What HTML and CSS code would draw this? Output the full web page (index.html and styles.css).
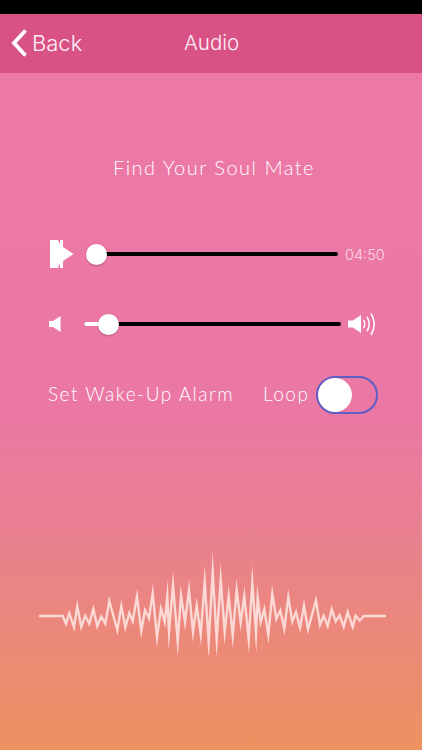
FILE: index.html
```html
<!DOCTYPE html>
<html lang="en">
<head>
<meta charset="utf-8">
<title>Audio</title>
<link rel="stylesheet" href="styles.css">
</head>
<body>
<div class="status"></div>
<header class="nav">
  <div class="back">
    <svg class="chevron" width="16" height="28" viewBox="0 0 16 28"><path d="M14.500 1.500 L3 14 L14.500 26.500" fill="none" stroke="#fff" stroke-width="3.800"/></svg>
    <span>Back</span>
  </div>
  <h1 class="nav-title">Audio</h1>
</header>
<main class="content">
  <h2 class="track-title">Find Your Soul Mate</h2>
  <div class="player">
    <svg class="play" width="24" height="30" viewBox="0 0 24 30"><path d="M0 1 H8 L10 5.500 V1 H13 V8 L23.500 15 L13 22 V29 H10 V24.500 L8 29 H0 Z" fill="#fff"/></svg>
    <div class="track track-seek"><span class="knob knob-seek"></span></div>
    <span class="time">04:50</span>
  </div>
  <div class="volume">
    <svg class="vol-low" width="12" height="16" viewBox="0 0 12 16"><path d="M0 5 H4 L11.500 0 V16 L4 11 H0 Z" fill="#fff"/></svg>
    <div class="track track-vol"><span class="fill"></span><span class="knob knob-vol"></span></div>
    <svg class="vol-high" width="29" height="24" viewBox="0 0 29 24"><path d="M0 8.500 H5 L13 3 V21 L5 15.500 H0 Z" fill="#fff"/><path d="M15.500 8 Q18 12 15.500 16 M19 5 Q23.500 12 19 19 M23 1.500 Q29.500 12 23 23" fill="none" stroke="#fff" stroke-width="1.500"/></svg>
  </div>
  <div class="options">
    <span class="alarm">Set Wake-Up Alarm</span>
    <span class="loop">Loop</span>
    <span class="switch"><span class="switch-knob"></span></span>
  </div>
  <svg class="wave" width="422" height="110" viewBox="0 545 422 110">
    <polyline transform="translate(0 616) scale(1 .72) translate(0 -616)" vector-effect="non-scaling-stroke" fill="none" stroke="#fcd9d4" stroke-width="2.400" stroke-linejoin="miter" stroke-miterlimit="24" points="39,616 62.700,616 66,626.700 69.300,612.300 74,631.700 77.300,602.300 81.300,631 85.300,615.700 89.300,626.700 93.300,606.300 97.300,630 101.300,616.700 105.300,626.700 109.300,595 117.300,635.700 121.300,602.300 125.300,631.700 129.300,611.700 132.700,623.300 137,589 141.300,636.700 145,607.700 149,619 152.700,584.300 157,645.700 161,605.700 164.700,623.700 167.300,588.300 169,638.300 173,573.300 177.700,651 181,587.700 185,624.300 189,580 193,638.300 196.700,601.700 200.700,641.700 204.700,569 208.700,651.700 212.700,555 216.700,648.300 220.700,565.700 224.700,638.300 228.700,588.300 232.700,643.300 236.700,580 240.700,625 244.300,588.300 248.700,648.300 252.300,570 256,640 257.700,591 260.700,624.300 264.300,606.700 268.300,642.300 272.300,585 276.300,620 280.300,608.300 284.300,633.300 288.300,590 292.300,623.300 296,610.700 300,632.300 304,601.700 308,634.300 316,594.300 320,628.300 323.700,615.700 327.700,630 331.700,606.700 335.700,623.300 339.700,615 343.700,631 347.700,610.700 352.700,631 355.700,615.700 359.700,622.300 364,616 386,616"/>
  </svg>
</main>
</body>
</html>
```
FILE: styles.css
```css
* { box-sizing: border-box; }
html, body { margin: 0; height: 100%; }
body {
  width: 422px;
  height: 750px;
  overflow: hidden;
  display: flex;
  flex-direction: column;
  font-family: "Lato", "Liberation Sans", sans-serif;
  color: #fff;
}
.status { height: 14px; background: #000; flex: none; }
.nav {
  height: 59px;
  flex: none;
  background: #d85285;
  display: flex;
  align-items: center;
  padding: 0 0 2px 11px;
  font-family: "Inter", "Liberation Sans", sans-serif;
  font-weight: 300;
}
.back { display: flex; align-items: center; gap: 5px; font-size: 22px; width: 173px; color: #fdeef4; }
.chevron { display: block; }
.nav-title { margin: 0; font-size: 20.500px; font-weight: 300; color: #fdeef4; }
.content {
  flex: 1;
  display: flex;
  flex-direction: column;
  background: linear-gradient(to bottom, #ec78a6 0%, #eb78a4 50%, #e98090 68%, #ee9160 100%);
}
.track-title {
  margin: 82px 0 0 0;
  padding-left: 6px;
  text-align: center;
  font-size: 20px;
  line-height: 24px;
  font-weight: 300;
  letter-spacing: 1.500px;
  color: #fff;
}
.player { display: flex; align-items: center; height: 30px; margin-top: 60px; padding-left: 50px; }
.play { flex: none; display: block; }
.track { position: relative; height: 4px; background: #000; border-radius: 2px; }
.track-seek { width: 242px; margin-left: 22px; }
.time { margin-left: 7px; font-size: 14.500px; font-family: "Inter", "Liberation Sans", sans-serif; font-weight: 300; color: #fbd8e5; }
.knob {
  position: absolute;
  top: 50%;
  width: 21px;
  height: 21px;
  margin: -10.500px 0 0 -10.500px;
  border-radius: 50%;
  background: #fff;
  box-shadow: 0 1px 2px rgba(0, 0, 0, .25);
}
.knob-seek { left: 0; }
.volume { display: flex; align-items: center; height: 24px; margin-top: 43px; padding-left: 49px; }
.vol-low { flex: none; display: block; }
.track-vol { width: 257px; margin-left: 23px; }
.fill { position: absolute; left: 0; top: 0; bottom: 0; width: 24px; background: #fff; border-radius: 2px; }
.knob-vol { left: 24px; }
.vol-high { flex: none; margin-left: 7px; display: block; }
.options { display: flex; align-items: center; height: 38px; margin-top: 40px; padding-left: 48px; font-size: 19px; font-weight: 300; letter-spacing: 1.500px; color: #fff; }
.alarm { width: 215px; padding-bottom: 3px; }
.loop { width: 53px; padding-bottom: 3px; }
.switch {
  display: flex;
  align-items: center;
  width: 62px;
  height: 38px;
  border: 2px solid #5d5fc6;
  border-radius: 19px;
  padding: 0;
}
.switch-knob { display: block; width: 34px; height: 34px; border-radius: 50%; background: #fff; box-shadow: 0 0 1px rgba(0, 0, 0, .15); }
.wave { display: block; margin-top: 131px; }
```
